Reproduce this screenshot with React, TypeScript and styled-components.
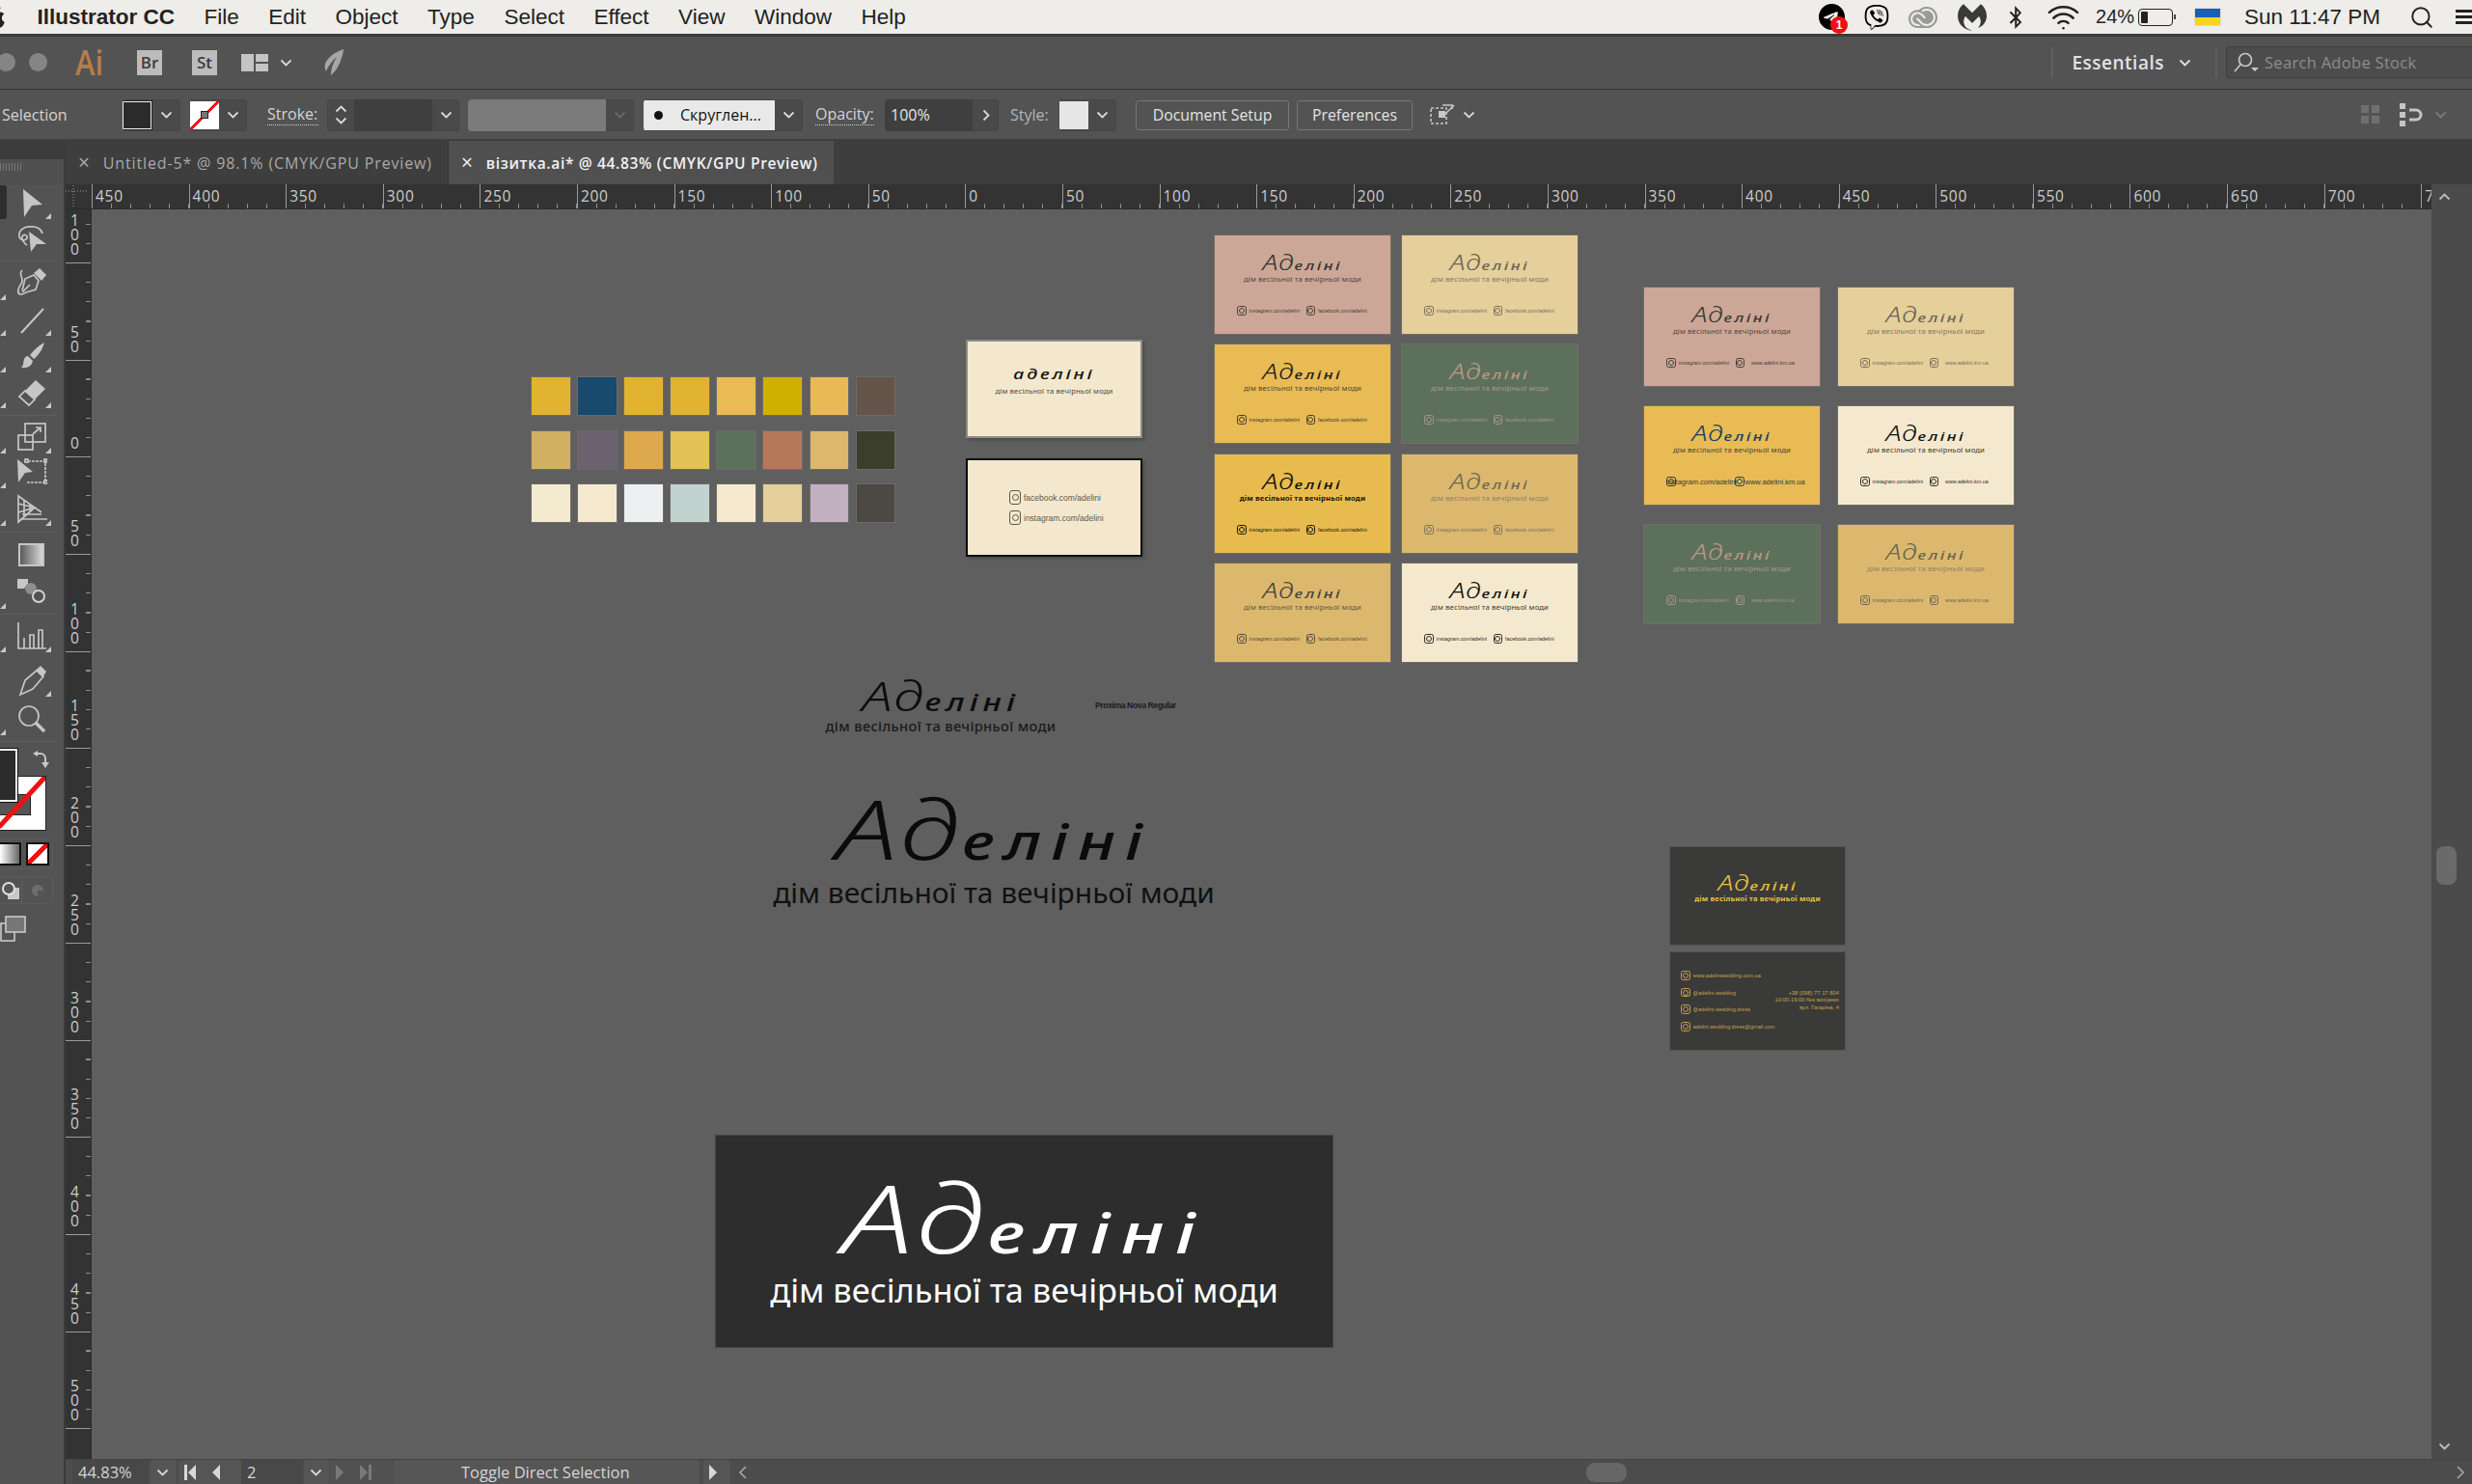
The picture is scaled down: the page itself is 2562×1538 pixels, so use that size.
import React from "react";
import styled, { createGlobalStyle } from "styled-components";
import { SiViber, SiTelegram, SiMalwarebytes, SiAdobecreativecloud } from "react-icons/si";
import { FaApple, FaBluetoothB } from "react-icons/fa";
import { Wifi, Search } from "lucide-react";

const UI = `"Open Sans", "Noto Sans", sans-serif`;
const SYS = `"Liberation Sans", Arimo, sans-serif`;

const Global = createGlobalStyle`
  html, body { margin: 0; padding: 0; background: #535353; }
  * { box-sizing: border-box; }
`;

const Page = styled.div`
  width: 2562px; height: 1538px; overflow: hidden; display: flex; flex-direction: column;
  background: #535353; font-family: ${UI};
`;

/* ---------- macOS menu bar ---------- */
const MenuBar = styled.div`
  height: 38px; flex: none; display: flex; align-items: flex-start; background: #eeede9;
  border-bottom: 3px solid #3b3b3b; color: #222; font-family: ${SYS}; font-size: 22.5px; position: relative;
`;
const MenuLeft = styled.div`display: flex; align-items: center; height: 35px; gap: 30.5px;`;
const AppleMark = styled.span`display: flex; margin-left: -16px; margin-right: -3px; font-size: 24px; color: #222;`;
const AppName = styled.span`font-weight: 700; margin-left: 3px;`;
const MenuRight = styled.div`margin-left: auto; display: flex; align-items: center; height: 35px; margin-right: -3px;`;
const TrayItem = styled.span<{ $ml: number; $c?: string }>`
  display: flex; align-items: center; margin-left: ${(p) => p.$ml}px; color: ${(p) => p.$c || "#111"}; position: relative;
`;
const Badge = styled.span`
  position: absolute; right: -3px; bottom: -4px; width: 18px; height: 18px; border-radius: 50%;
  background: #ee1111; color: #fff; font-size: 12px; font-weight: 700; display: flex; align-items: center; justify-content: center;
`;
const TrayText = styled.span<{ $ml: number; $size?: number }>`
  margin-left: ${(p) => p.$ml}px; font-size: ${(p) => p.$size || 22.5}px; color: #222; white-space: nowrap;
`;
const Battery = styled.span`
  margin-left: 4px; width: 36px; height: 18px; border: 1.5px solid #222; border-radius: 4px; padding: 2px; display: flex; position: relative;
  &::before { content: ""; width: 7px; background: #222; border-radius: 1px; }
  &::after { content: ""; position: absolute; right: -4px; top: 5px; width: 2px; height: 5px; background: #444; }
`;
const Flag = styled.span`
  margin-left: 23px; width: 26px; height: 17px; background: linear-gradient(#1a5fb4 0 50%, #f7d51d 50% 100%); box-shadow: 0 0 0 1px #ddd;
`;
const ListIcon = styled.span`
  margin-left: 22px; width: 20px; height: 15px; flex: none;
  background: repeating-linear-gradient(#222 0 3px, transparent 3px 6px);
`;

/* ---------- Application bar ---------- */
const AppBar = styled.div`
  height: 55px; flex: none; display: flex; align-items: center; background: #535353; border-bottom: 1px solid #363636; padding-bottom: 1px;
`;
const WinDot = styled.span<{ $ml: number }>`
  width: 19px; height: 19px; border-radius: 50%; background: #858585; margin-left: ${(p) => p.$ml}px; flex: none;
`;
const AiLogo = styled.span`
  margin-left: 29px; font-family: "Open Sans", sans-serif; font-size: 36px; line-height: 1; color: #b67c4b; font-weight: 600; width: 30px; transform: scaleX(.86); transform-origin: left;
`;
const AppTile = styled.span<{ $ml: number }>`
  margin-left: ${(p) => p.$ml}px; width: 26px; height: 26px; background: #bcbcbc; color: #3d3d3d; font-size: 17px; font-weight: 600;
  display: flex; align-items: center; justify-content: center; flex: none;
`;
const AppIcon = styled.span<{ $ml: number }>`margin-left: ${(p) => p.$ml}px; display: flex; flex: none;`;
const AppRight = styled.div`margin-left: auto; display: flex; align-items: center; height: 100%;`;
const VSep = styled.span`width: 2px; height: 32px; background: #5f5f5f; flex: none;`;
const Essentials = styled.span`
  font-size: 19px; font-weight: 600; color: #e2e2e2; margin-left: 19px; margin-right: 15px; letter-spacing: .5px;
`;
const ChevSpacer = styled.span`width: 25px; flex: none;`;
const StockSearch = styled.div`
  width: 255px; height: 33px; margin-left: 9px; border: 1px solid #3e3e3e; border-right: 0; border-radius: 4px 0 0 4px; background: #4c4c4c;
  display: flex; align-items: center; padding-left: 7px; color: #8c8c8c; font-size: 16.5px; gap: 6px; letter-spacing: .3px;
`;

/* ---------- Control bar ---------- */
const ControlBar = styled.div`
  height: 53px; flex: none; display: flex; align-items: center; background: #535353; border-bottom: 2px solid #3e3e3e; color: #d0d0d0; font-size: 16px; padding-top: 1px;
`;
const CtrlLabel = styled.span<{ $ml: number; $w: number; $dotted?: boolean; $c?: string }>`
  margin-left: ${(p) => p.$ml}px; width: ${(p) => p.$w}px; flex: none; white-space: nowrap; color: ${(p) => p.$c || "#d4d4d4"};
  ${(p) => p.$dotted && "border-bottom: 1px dotted #d4d4d4; line-height: 21px;"}
`;
const Group = styled.div<{ $ml: number; $w: number }>`
  margin-left: ${(p) => p.$ml}px; width: ${(p) => p.$w}px; height: 33px; flex: none; display: flex; align-items: stretch;
  background: #4a4a4a; border-radius: 4px; overflow: hidden; box-shadow: inset 0 0 0 1px #454545;
`;
const ChevBox = styled.span<{ $w: number }>`
  width: ${(p) => p.$w}px; flex: none; display: flex; align-items: center; justify-content: center;
`;
const FillChip = styled.span`width: 30px; flex: none; margin: 2px 0; background: #2b2b2b; border: 1.5px solid #f3f3f3; box-shadow: 0 0 0 1px #222;`;
const NoneChip = styled.span`
  width: 30px; flex: none; margin: 2px 0; position: relative; display: flex; align-items: center; justify-content: center;
  background: linear-gradient(135deg, #fff 0 46%, #ee1111 46% 54%, #fff 54% 100%);
`;
const NoneDot = styled.span`width: 8px; height: 8px; border: 1px solid #222; background: #777;`;
const Stepper = styled.span`width: 28px; flex: none; display: flex; flex-direction: column; align-items: center; justify-content: space-around; padding: 4px 0;`;
const DarkInput = styled.span<{ $w: number }>`
  width: ${(p) => p.$w}px; flex: none; background: #3f3f3f; color: #e6e6e6; display: flex; align-items: center; padding-left: 6px;
`;
const GreyBlock = styled.span`width: 143px; flex: none; background: #7b7b7b;`;
const BrushPick = styled.span`
  width: 136px; flex: none; background: #e9e9e9; color: #111; display: flex; align-items: center; margin: 1px 0; font-size: 16px; white-space: nowrap;
  &::before { content: ""; width: 9px; height: 9px; border-radius: 50%; background: #111; margin: 0 18px 0 11px; }
`;
const LightChip = styled.span`width: 30px; flex: none; margin: 2px 0; background: #e6e6e6;`;
const CtrlButton = styled.button<{ $ml: number; $w: number }>`
  margin-left: ${(p) => p.$ml}px; width: ${(p) => p.$w}px; height: 31px; flex: none; background: #535353; border: 1px solid #777; border-radius: 3px;
  color: #e4e4e4; font-family: ${UI}; font-size: 15.8px; padding: 0;
`;
const CtrlIcon = styled.span<{ $ml: number }>`margin-left: ${(p) => p.$ml}px; display: flex; flex: none;`;

/* ---------- Workspace ---------- */
const Workspace = styled.div`flex: 1; min-height: 0; display: flex;`;

const ToolPanel = styled.div`
  width: 68px; flex: none; background: #3c3c3c; display: flex; flex-direction: column; border-right: 2px solid #3a3a3a; overflow: hidden;
`;
const ToolHead = styled.div`
  height: 27px; margin-top: 19px; flex: none; background: #505050; padding-top: 4px;
  &::before { content: ""; display: block; width: 24px; height: 8px; background: repeating-linear-gradient(90deg, #777 0 1px, transparent 1px 3px); }
`;
const ToolBody = styled.div`flex: 1; background: #535353; display: flex; flex-direction: column;`;
const ToolRow = styled.div<{ $h: number; $mt?: number; $selected?: boolean }>`
  height: ${(p) => p.$h}px; margin-top: ${(p) => p.$mt || 0}px; flex: none; display: flex; position: relative; padding-left: 17px; align-items: center;
  ${(p) => p.$selected && `&::before { content: ""; position: absolute; left: -4px; top: 0; width: 11px; height: 35px; border-radius: 3px; background: #2d2d2d; }`}
`;
const Corner = styled.span<{ $x: number }>`
  position: absolute; left: ${(p) => p.$x}px; bottom: 2px; width: 0; height: 0;
  border-bottom: 6px solid #c8c8c8; border-left: 6px solid transparent;
`;
const ToolSep = styled.div<{ $mt: number; $mb: number }>`
  height: 1px; margin: ${(p) => p.$mt}px 8px ${(p) => p.$mb}px 0; background: #5e5e5e; flex: none;
`;
const ToolSvg = styled.svg.attrs({ viewBox: "0 0 32 32", width: 32, height: 32, fill: "none" })`
  stroke: #c6c6c6; stroke-width: 1.7; flex: none;
`;
const Solid = styled.g`fill: #c6c6c6; stroke: none;`;
const FillStroke = styled.div`height: 91px; margin-top: 2px; flex: none; position: relative;`;
const FillBig = styled.span`
  position: absolute; left: -3px; top: 4px; width: 21px; height: 55px; background: #2b2b2b; border: 2px solid #f2f2f2; box-shadow: 0 0 0 1px #111; z-index: 2;
`;
const StrokeBig = styled.span`
  position: absolute; left: -3px; top: 33px; width: 50px; height: 55px; background: #fff; box-shadow: 0 0 0 1px #222;
  &::before { content: ""; position: absolute; left: 0; top: 18px; width: 33px; height: 20px; background: #555; border: 1px solid #222; }
`;
const RedSlash = styled.svg.attrs({ viewBox: "0 0 50 55", width: 50, height: 55 })`position: absolute; left: 0; top: 0;`;
const SwapIcon = styled.span`position: absolute; left: 33px; top: 6px; display: flex;`;
const ModePanel = styled.div<{ $mt: number; $h: number }>`
  height: ${(p) => p.$h}px; margin-top: ${(p) => p.$mt}px; width: 55px; flex: none; display: flex; align-items: center;
  border: 1px solid #5c5c5c; border-left: 0; border-radius: 0 5px 5px 0;
`;
const ModeCell = styled.span<{ $w: number }>`
  width: ${(p) => p.$w}px; flex: none; height: 100%; display: flex; align-items: center; justify-content: center; border-right: 1px solid #5c5c5c;
  &:last-child { border-right: 0; }
`;
const GradChip = styled.span`
  width: 20px; height: 20px; margin-left: -3px; background: linear-gradient(90deg, #fff, #666); box-shadow: 0 0 0 2px #111;
`;
const NoneSmall = styled.span`
  width: 20px; height: 20px; background: linear-gradient(135deg, #fff 0 42%, #ee1111 42% 58%, #fff 58% 100%); box-shadow: 0 0 0 2px #111;
`;
const ScreenMode = styled.div`margin-top: 12px; height: 30px; flex: none; display: flex;`;

const MainCol = styled.div`flex: 1; min-width: 0; display: flex; flex-direction: column;`;
const TabBar = styled.div`height: 45px; flex: none; display: flex; background: #3e3e3e;`;
const Tab = styled.div<{ $w: number; $active?: boolean }>`
  width: ${(p) => p.$w}px; flex: none; display: flex; align-items: center; background: ${(p) => (p.$active ? "#505050" : "#3e3e3e")};
  color: ${(p) => (p.$active ? "#f2f2f2" : "#a9a9a9")}; font-size: ${(p) => (p.$active ? 15.5 : 16)}px; letter-spacing: ${(p) => (p.$active ? 0.67 : 0.85)}px; white-space: nowrap; padding-left: 13px; gap: 13px;
  font-weight: ${(p) => (p.$active ? 600 : 400)};
  ${(p) => !p.$active && "border-right: 1px solid #333;"}
`;
const TabClose = styled.span`font-size: 21px; line-height: 1; font-weight: 400;`;
const HRuler = styled.div`height: 26px; flex: none; display: flex; background: #333; overflow: hidden; border-bottom: 1px solid #2c2c2c;`;
const RulerCorner = styled.div`width: 27px; flex: none; display: flex;`;
const HCell = styled.div`
  width: 100.6px; flex: none; border-left: 1px solid #9a9a9a; padding-left: 3px; color: #cdcdcd; font-size: 15.5px; letter-spacing: .7px; line-height: 24px; height: 25px;
  background: repeating-linear-gradient(90deg, transparent 0 19px, #8d8d8d 19px 20.12px) left bottom / 100% 5px no-repeat;
`;
const Middle = styled.div`flex: 1; min-height: 0; display: flex;`;
const VRuler = styled.div`width: 27px; flex: none; background: #333; display: flex; flex-direction: column; overflow: hidden; border-right: 1px solid #2c2c2c;`;
const VCell = styled.div<{ $h: number }>`
  height: ${(p) => p.$h}px; flex: none; border-bottom: 1px solid #9a9a9a; display: flex; flex-direction: column; justify-content: flex-end; padding: 0 0 6px 5px;
  background: repeating-linear-gradient(0deg, transparent 0 19px, #8d8d8d 19px 20.14px) right bottom / 5px 100% no-repeat;
`;
const VLabel = styled.span`color: #cdcdcd; font-size: 15.5px; line-height: 15px; width: 10px; word-break: break-all; display: block;`;
const Canvas = styled.div`flex: 1; min-width: 0; background: #5f5f5f; position: relative; overflow: hidden;`;
const VScroll = styled.div`
  width: 42px; margin-top: -26px; flex: none; background: #4b4b4b; display: flex; flex-direction: column; align-items: flex-start; position: relative;
`;
const ScrollBtn = styled.span`width: 26px; height: 26px; display: flex; align-items: center; justify-content: center; flex: none;`;
const VThumb = styled.span`width: 21px; height: 40px; margin: 660px 0 0 5px; background: #6a6a6a; border-radius: 8px; flex: none;`;
const Grow = styled.span`flex: 1;`;
const StatusBar = styled.div`height: 26px; flex: none; display: flex; align-items: stretch; background: #4c4c4c; color: #d5d5d5; font-size: 16.5px; border-top: 1px solid #444;`;
const StatusBox = styled.span<{ $w: number; $ml?: number; $bg?: string }>`
  width: ${(p) => p.$w}px; margin-left: ${(p) => p.$ml || 0}px; flex: none; display: flex; align-items: center; gap: 17px; padding-left: 6px;
  background: ${(p) => p.$bg || "#555"}; border-radius: 3px 3px 0 0; white-space: nowrap;
`;
const StatusMsg = styled.span`margin-left: 64px;`;
const Track = styled.div`flex: 1; display: flex; align-items: center; justify-content: space-between; padding-right: 7px; padding-left: 8px;`;
const HThumb = styled.span`width: 42px; height: 20px; border-radius: 9px; background: #666; margin-left: 869px;`;
const Tri = styled.span<{ $dir: "l" | "r"; $c?: string }>`
  width: 0; height: 0; border-top: 8px solid transparent; border-bottom: 8px solid transparent; flex: none;
  ${(p) => (p.$dir === "l" ? `border-right: 8px solid ${p.$c || "#d8d8d8"};` : `border-left: 8px solid ${p.$c || "#d8d8d8"};`)}
`;
const Bar = styled.span<{ $c?: string }>`width: 3px; height: 16px; background: ${(p) => p.$c || "#d8d8d8"}; flex: none;`;
const Pair = styled.span`display: flex; align-items: center; gap: 1px;`;

/* ---------- Artwork on the canvas ---------- */
const Placed = styled.div<{ $x: number; $y: number }>`
  position: absolute; left: ${(p) => p.$x - 95}px; top: ${(p) => p.$y - 218}px;
`;
const SwatchGrid = styled(Placed)`
  display: grid; grid-template-columns: repeat(8, 39.5px); grid-auto-rows: 39px; column-gap: 8.6px; row-gap: 16.5px;
`;
const Swatch = styled.div<{ $c: string }>`background: ${(p) => p.$c}; box-shadow: 0 0 0 1px rgba(110,110,110,.8);`;

const Script = styled.span<{ $em: number; $c: string }>`
  display: block; flex: none; height: 1.5em; padding-top: .5em; font-family: "Noto Sans", sans-serif; font-style: italic; font-weight: 500; font-size: ${(p) => p.$em}px; line-height: 1;
  letter-spacing: .15em; white-space: nowrap; color: ${(p) => p.$c}; transform: scaleX(1.34);
`;
const ScriptCap = styled.span`font-size: 1.7em; font-weight: 300; line-height: 0; letter-spacing: .02em;`;

const Card = styled(Placed)<{ $bg: string }>`
  width: 182px; height: 102px; background: ${(p) => p.$bg};
  box-shadow: 0 0 0 1px rgba(125,120,110,.6);
  display: flex; flex-direction: column; align-items: center; overflow: hidden; padding-top: 20px;
`;
const Tagline = styled.span<{ $c: string; $w?: number; $mt?: number }>`
  margin-top: ${(p) => (p.$mt === undefined ? 2.5 : p.$mt)}px; font-family: "Noto Sans", sans-serif; font-size: 7.7px; line-height: 9px; color: ${(p) => p.$c}; white-space: nowrap; font-weight: ${(p) => p.$w || 400}; letter-spacing: .14px;
`;
const Contacts = styled.div`
  margin-top: auto; margin-bottom: 19px; display: flex; align-items: center; width: 100%; padding-left: 23px; height: 10px; position: relative;
`;
const Social = styled.span<{ $c: string }>`
  width: 9.5px; height: 9.5px; border-radius: 2.5px; border: 1px solid ${(p) => p.$c}; flex: none; display: flex; align-items: center; justify-content: center;
  &::before { content: ""; width: 4px; height: 4px; border-radius: 50%; border: 1px solid ${(p) => p.$c}; }
`;
const ContactText = styled.span<{ $c: string; $w: number; $size?: number; $ml?: number }>`
  color: ${(p) => p.$c}; font-family: "Liberation Sans", sans-serif; font-size: ${(p) => p.$size || 5.4}px; margin-left: ${(p) => (p.$ml === undefined ? 3 : p.$ml)}px; width: ${(p) => p.$w}px; white-space: nowrap; flex: none;
`;

const LogoBlock = styled(Placed)<{ $w: number }>`
  width: ${(p) => p.$w}px; display: flex; flex-direction: column; align-items: center;
`;
const BigTag = styled.span<{ $size: number; $c: string; $ls?: number; $mt: number; $w?: number }>`
  margin-top: ${(p) => p.$mt}px; font-family: "Noto Sans", sans-serif; font-size: ${(p) => p.$size}px; line-height: 1.1; letter-spacing: ${(p) => p.$ls || 0}px; color: ${(p) => p.$c}; font-weight: ${(p) => p.$w || 400}; white-space: nowrap;
`;
const FontNote = styled(Placed)`
  font-family: "Liberation Sans", sans-serif; font-size: 8.6px; font-weight: 700; letter-spacing: -.4px; color: #1b1b1b; white-space: nowrap;
`;
const Banner = styled(Placed)`
  width: 641px; height: 221px; background: #2d2d2d; box-shadow: inset 0 0 0 1px #444; display: flex; flex-direction: column; align-items: center; padding-top: 43px;
`;
const CreamCard = styled(Placed)<{ $black?: boolean }>`
  width: 183px; height: 102px; background: #f3e8cd; border: ${(p) => (p.$black ? "2px solid #0c0c0c" : "2px solid #8c8c8c")};
  box-shadow: 2px 2px 3px rgba(40,40,40,.35); display: flex; flex-direction: column; align-items: center;
`;
const CreamFront = styled.div`display: flex; flex-direction: column; align-items: center; padding-top: 20px;`;
const CreamRows = styled.div`display: flex; flex-direction: column; gap: 6px; align-self: flex-start; margin: 31px 0 0 43px;`;
const CreamRow = styled.div`display: flex; align-items: center; gap: 3px; font-family: "Liberation Sans", sans-serif; font-size: 8.5px; color: #5c5850;`;
const CreamIcon = styled.span`
  width: 12px; height: 15px; border: 1px solid #5c5850; border-radius: 3px; display: flex; align-items: center; justify-content: center; flex: none;
  &::before { content: ""; width: 5px; height: 5px; border-radius: 50%; border: 1px solid #5c5850; }
`;
const DarkFront = styled(Placed)`
  width: 181px; height: 101px; background: #3a3a38; box-shadow: 0 0 0 1px #555; display: flex; flex-direction: column; align-items: center; padding-top: 29px;
`;
const DarkBack = styled(Placed)`
  width: 181px; height: 101px; background: #3a3a38; box-shadow: 0 0 0 1px #555; display: flex; padding: 19px 13px 0 11px; justify-content: space-between;
`;
const DarkList = styled.div`display: flex; flex-direction: column; gap: 7.6px;`;
const DarkRow = styled.div`display: flex; align-items: center; gap: 3px; color: #c4a24c; font-family: "Liberation Sans", sans-serif; font-size: 5.6px; height: 10px; white-space: nowrap;`;
const DarkAddr = styled.div`
  margin-top: 20px; display: flex; flex-direction: column; align-items: flex-end; color: #c4a24c; font-family: "Liberation Sans", sans-serif; font-size: 5.8px; line-height: 7.4px; white-space: nowrap;
`;

/* ---------- data ---------- */
const TAG = "дім весільної та вечірньої моди";
const swatches = [
  "#e2b330", "#174a6c", "#e1b32f", "#e2b330", "#e8bb55", "#d1b100", "#e9b955", "#65544a",
  "#d2b061", "#6a626f", "#dea84d", "#e3c356", "#5d705b", "#b5795a", "#dcb86f", "#3b3d2d",
  "#f4ead0", "#f4e9cf", "#ecf0f0", "#c2d3cf", "#f4e9cf", "#e5cf9a", "#c2b1c0", "#4c4844",
];
type C = { x: number; y: number; bg: string; s: string; t: string; k: string; bold?: boolean };
const ROSE = "#cca797", SAND = "#e5cf9a", YEL = "#e8bb55", GRN = "#5d705b", TAN = "#dcb86f", CRM = "#f4e9cf";
const cardsA: C[] = [
  { x: 1259, y: 245, bg: ROSE, s: "#35332f", t: "#4d4641", k: "#474038" },
  { x: 1453, y: 245, bg: SAND, s: "#6b6458", t: "#807865", k: "#776f5e" },
  { x: 1259, y: 358, bg: YEL, s: "#1d1c18", t: "#4e4630", k: "#453d28" },
  { x: 1453, y: 358, bg: GRN, s: "#b99a87", t: "#a89a87", k: "#a3978a" },
  { x: 1259, y: 472, bg: "#e8bb4f", s: "#0d0d0a", t: "#17150e", k: "#17150e", bold: true },
  { x: 1453, y: 472, bg: TAN, s: "#6b6a52", t: "#8c8164", k: "#7d735a" },
  { x: 1259, y: 585, bg: TAN, s: "#45443a", t: "#5d5642", k: "#544d3b" },
  { x: 1453, y: 585, bg: CRM, s: "#0f0f0d", t: "#3a3833", k: "#2d2b27" },
];
const cardsB: C[] = [
  { x: 1704, y: 299, bg: ROSE, s: "#3a3834", t: "#4d4641", k: "#474038" },
  { x: 1905, y: 299, bg: SAND, s: "#6b6458", t: "#807865", k: "#776f5e" },
  { x: 1905, y: 422, bg: CRM, s: "#0f0f0d", t: "#3a3833", k: "#2d2b27" },
  { x: 1704, y: 545, bg: GRN, s: "#b99a87", t: "#a89a87", k: "#a3978a" },
  { x: 1905, y: 545, bg: TAN, s: "#67664c", t: "#8c8164", k: "#6f674e" },
];
const hLabels = ["450","400","350","300","250","200","150","100","50","0","50","100","150","200","250","300","350","400","450","500","550","600","650","700","7"];
const vLabels = ["100","50","0","50","100","150","200","250","300","350","400","450","500"];

/* ---------- small drawings ---------- */
const Chev = ({ c = "#d8d8d8", up = false }: { c?: string; up?: boolean }) => (
  <svg width="13" height="8" viewBox="0 0 13 8" fill="none" stroke={c} strokeWidth="1.8">
    <polyline points={up ? "1.5,6.5 6.5,1.5 11.5,6.5" : "1.5,1.5 6.5,6.5 11.5,1.5"} />
  </svg>
);
const Wordmark = ({ em, c }: { em: number; c: string }) => (
  <Script $em={em} $c={c}><ScriptCap>Ад</ScriptCap>еліні</Script>
);

const tools: { h: number; mt?: number; sel?: boolean; l?: boolean; r?: boolean; sep?: [number, number]; icon: React.ReactNode }[] = [
  { h: 37, sel: true, r: true, icon: <ToolSvg><Solid><polygon points="7,1 27,17 16,18 8,30" /></Solid></ToolSvg> },
  { h: 38, sep: [3, 4], icon: <ToolSvg><path d="M15 3C8 2 2 7 3 13c1 4 6 5 8 2 1-3-3-5-5-2-1 3 2 7 5 9" /><path d="M14 3c6-1 12 2 13 7" /><Solid><polygon points="13,8 31,21 21,21 15,29" /></Solid></ToolSvg> },
  { h: 38, l: true, icon: <ToolSvg><path d="M6 2C1 7 9 10 5 16c-3 4-5 10-1 11 2 1 4-1 6-2l10-3 3-9-5-6-9 4-3 12" /><path d="M6 25l8-8" /><Solid><polygon points="18,5 24,0 31,7 26,13" /></Solid></ToolSvg> },
  { h: 37, l: true, r: true, icon: <ToolSvg><line x1="5" y1="29" x2="28" y2="4" strokeWidth="2" /></ToolSvg> },
  { h: 38, l: true, r: true, icon: <ToolSvg><Solid><path d="M29 2c-2 7-6 13-11 17l-4-4c4-5 9-10 15-13z" /><path d="M12 16l5 5c-1 5-5 8-12 7 3-3 2-6 3-9 1-2 2-3 4-3z" /></Solid></ToolSvg> },
  { h: 37, l: true, r: true, sep: [5, 3], icon: <ToolSvg><Solid><polygon points="9,14 20,3 30,12 19,23" /></Solid><polygon points="9,14 19,23 13,29 3,20" /></ToolSvg> },
  { h: 38, l: true, r: true, icon: <ToolSvg><rect x="2" y="14" width="15" height="15" /><rect x="9" y="2" width="21" height="19" /><path d="M17 13l8-7M20 6h5v5" /></ToolSvg> },
  { h: 36, l: true, icon: <ToolSvg><Solid><polygon points="1,2 17,15 9,16 2,26" /></Solid><path d="M12 4h18v22H10" strokeDasharray="3 1" /><rect x="9" y="2" width="3" height="3" /><rect x="29" y="2" width="3" height="3" /><rect x="29" y="24" width="3" height="3" /></ToolSvg> },
  { h: 39, l: true, r: true, sep: [4, 4], icon: <ToolSvg strokeWidth="1.2"><path d="M2 2l17 12-17 15zM2 10l17 4M2 19l17-5M8 6v18M14 10v9" /><path d="M19 14l7 5M6 21h20M4 26h28" /></ToolSvg> },
  { h: 38, icon: <ToolSvg><defs><linearGradient id="gt" x1="0" x2="1"><stop offset="0" stopColor="#555" /><stop offset="1" stopColor="#ddd" /></linearGradient></defs><rect x="3" y="5" width="25" height="22" fill="url(#gt)" stroke="#c6c6c6" strokeWidth="2" /></ToolSvg> },
  { h: 39, l: true, sep: [3, 4], icon: <ToolSvg><Solid><polygon points="1,2 12,2 12,7 8,12 1,12" /></Solid><circle cx="15" cy="12" r="6" fill="#8e8e8e" stroke="none" /><circle cx="23" cy="20" r="6" stroke="#d2d2d2" strokeWidth="2" /></ToolSvg> },
  { h: 37, l: true, r: true, icon: <ToolSvg strokeWidth="2"><path d="M2 1v27h29M8 28V17M14 28V14h4v14M23 28V9h4v19" /></ToolSvg> },
  { h: 37, mt: 9, r: true, icon: <ToolSvg><path d="M4 30l5-15 13-11 6 7-11 13z" /><Solid><polygon points="20,5 25,0 31,6 27,12" /></Solid></ToolSvg> },
  { h: 39, mt: 1, l: true, sep: [4, 1], icon: <ToolSvg strokeWidth="2"><circle cx="13" cy="13" r="10" /><line x1="20" y1="20" x2="29" y2="29" strokeWidth="3.5" /></ToolSvg> },
];

const ICard = ({ c, second, secondW, secondMl }: { c: C; second: string; secondW: number; secondMl?: number }) => (
  <Card $x={c.x} $y={c.y} $bg={c.bg}>
    <Wordmark em={12.6} c={c.s} />
    <Tagline $c={c.t} $w={c.bold ? 700 : 400}>{TAG}</Tagline>
    <Contacts>
      <Social $c={c.k} />
      <ContactText $c={c.k} $w={59}>instagram.com/adelini</ContactText>
      <Social $c={c.k} />
      <ContactText $c={c.k} $w={secondW} $ml={secondMl}>{second}</ContactText>
    </Contacts>
  </Card>
);

export default function App() {
  return (
    <Page>
      <Global />
      <MenuBar>
        <MenuLeft>
          <AppleMark><FaApple /></AppleMark>
          <AppName>Illustrator CC</AppName>
          {["File", "Edit", "Object", "Type", "Select", "Effect", "View", "Window", "Help"].map((m) => <span key={m}>{m}</span>)}
        </MenuLeft>
        <MenuRight>
          <TrayItem $ml={0} $c="#000"><SiTelegram size={27} /><Badge>1</Badge></TrayItem>
          <TrayItem $ml={20} $c="#000"><SiViber size={26} /></TrayItem>
          <TrayItem $ml={20} $c="#9a9a9a"><SiAdobecreativecloud size={30} /></TrayItem>
          <TrayItem $ml={21} $c="#3a3a3a"><SiMalwarebytes size={30} /></TrayItem>
          <TrayItem $ml={18} $c="#222"><FaBluetoothB size={24} /></TrayItem>
          <TrayItem $ml={20} $c="#222"><Wifi size={35} strokeWidth={1.7} /></TrayItem>
          <TrayText $ml={16} $size={20}>24%</TrayText>
          <Battery />
          <Flag />
          <TrayText $ml={25}>Sun 11:47 PM</TrayText>
          <TrayItem $ml={30} $c="#222"><Search size={26} strokeWidth={1.8} /></TrayItem>
          <ListIcon />
        </MenuRight>
      </MenuBar>

      <AppBar>
        <WinDot $ml={-3} /><WinDot $ml={14} />
        <AiLogo>Ai</AiLogo>
        <AppTile $ml={34}>Br</AppTile>
        <AppTile $ml={31}>St</AppTile>
        <AppIcon $ml={25}>
          <svg width="28" height="18" viewBox="0 0 28 18" fill="#c4c4c4"><rect width="13" height="18" /><rect x="15" width="13" height="8" /><rect x="15" y="10" width="13" height="8" /></svg>
        </AppIcon>
        <AppIcon $ml={12}><Chev /></AppIcon>
        <AppIcon $ml={26}>
          <svg width="30" height="30" viewBox="0 0 30 30" fill="#a6a6a6"><path d="M27 1C18 4 11 9 8 16c-1 3 0 6 1 8 2-5 6-11 11-15-3 5-6 11-6 19 5-4 9-11 11-18 1-3 2-6 2-9z" /></svg>
        </AppIcon>
        <AppRight>
          <VSep />
          <Essentials>Essentials</Essentials>
          <Chev c="#e2e2e2" />
          <ChevSpacer />
          <VSep />
          <StockSearch>
            <svg width="26" height="24" viewBox="0 0 26 24" fill="none" stroke="#c8c8c8" strokeWidth="1.7"><circle cx="12" cy="9" r="6.5" /><line x1="7" y1="14" x2="1" y2="21" /><polygon points="18,17 26,17 22,21" fill="#c8c8c8" stroke="none" /></svg>
            <span>Search Adobe Stock</span>
          </StockSearch>
        </AppRight>
      </AppBar>

      <ControlBar>
        <CtrlLabel $ml={2} $w={80}>Selection</CtrlLabel>
        <Group $ml={45} $w={60}><FillChip /><ChevBox $w={30}><Chev /></ChevBox></Group>
        <Group $ml={10} $w={59}><NoneChip><NoneDot /></NoneChip><ChevBox $w={29}><Chev /></ChevBox></Group>
        <CtrlLabel $ml={21} $w={53} $dotted>Stroke:</CtrlLabel>
        <Group $ml={9} $w={137}>
          <Stepper><Chev up /><Chev /></Stepper>
          <DarkInput $w={81} />
          <ChevBox $w={28}><Chev /></ChevBox>
        </Group>
        <Group $ml={9} $w={172}><GreyBlock /><ChevBox $w={29}><Chev c="#686868" /></ChevBox></Group>
        <Group $ml={10} $w={165}><BrushPick>Скруглен...</BrushPick><ChevBox $w={29}><Chev /></ChevBox></Group>
        <CtrlLabel $ml={13} $w={61} $dotted>Opacity:</CtrlLabel>
        <Group $ml={11} $w={118}>
          <DarkInput $w={91}>100%</DarkInput>
          <ChevBox $w={27}>
            <svg width="8" height="13" viewBox="0 0 8 13" fill="none" stroke="#d8d8d8" strokeWidth="1.8"><polyline points="1.5,1.5 6.5,6.5 1.5,11.5" /></svg>
          </ChevBox>
        </Group>
        <CtrlLabel $ml={12} $w={41} $c="#b5b5b5">Style:</CtrlLabel>
        <Group $ml={10} $w={59}><LightChip /><ChevBox $w={29}><Chev /></ChevBox></Group>
        <CtrlButton $ml={20} $w={159}>Document Setup</CtrlButton>
        <CtrlButton $ml={8} $w={120}>Preferences</CtrlButton>
        <CtrlIcon $ml={18}>
          <svg width="26" height="26" viewBox="0 0 26 26" fill="none" stroke="#c8c8c8" strokeWidth="1.6"><rect x="1" y="6" width="16" height="16" strokeDasharray="3 2" /><path d="M13 3h10v4M17 11l8-8" /><rect x="9" y="9" width="7" height="7" fill="#c8c8c8" stroke="none" /></svg>
        </CtrlIcon>
        <CtrlIcon $ml={8}><Chev /></CtrlIcon>
        <CtrlIcon $ml={917}>
          <svg width="22" height="22" viewBox="0 0 22 22" fill="#707070"><rect x="1" y="1" width="8" height="8" /><rect x="12" y="1" width="8" height="8" /><rect x="1" y="12" width="8" height="8" /><rect x="12" y="12" width="8" height="8" /></svg>
        </CtrlIcon>
        <CtrlIcon $ml={19}>
          <svg width="24" height="24" viewBox="0 0 24 24"><g fill="#c4c4c4"><rect x="0" y="0" width="6" height="6" /><rect x="0" y="9" width="6" height="6" /><rect x="0" y="18" width="6" height="6" /></g><path d="M10 7h7a5 5 0 0 1 0 10h-7" fill="none" stroke="#c4c4c4" strokeWidth="3" /></svg>
        </CtrlIcon>
        <CtrlIcon $ml={12}><Chev c="#7a7a7a" /></CtrlIcon>
      </ControlBar>

      <Workspace>
        <ToolPanel>
          <ToolHead />
          <ToolBody>
            {tools.map((t, i) => (
              <React.Fragment key={i}>
                <ToolRow $h={t.h} $mt={t.mt} $selected={t.sel}>
                  {t.icon}
                  {t.l && <Corner $x={0} />}
                  {t.r && <Corner $x={47} />}
                </ToolRow>
                {t.sep && <ToolSep $mt={t.sep[0]} $mb={t.sep[1]} />}
              </React.Fragment>
            ))}
            <FillStroke>
              <StrokeBig>
                <RedSlash><line x1="50" y1="0" x2="2" y2="52" stroke="#ee1111" strokeWidth="5" /></RedSlash>
              </StrokeBig>
              <FillBig />
              <SwapIcon>
                <svg width="18" height="18" viewBox="0 0 18 18" fill="none" stroke="#c8c8c8" strokeWidth="2"><path d="M4 3h5a5 5 0 0 1 5 5v6" /><polygon points="1,3 6,0 6,6" fill="#c8c8c8" stroke="none" /><polygon points="10,12 18,12 14,18" fill="#c8c8c8" stroke="none" /></svg>
              </SwapIcon>
            </FillStroke>
            <ModePanel $mt={6} $h={32}>
              <ModeCell $w={23}><GradChip /></ModeCell>
              <ModeCell $w={31}><NoneSmall /></ModeCell>
            </ModePanel>
            <ModePanel $mt={7} $h={29}>
              <ModeCell $w={23}>
                <svg width="18" height="18" viewBox="0 0 18 18"><rect x="6" y="6" width="12" height="12" fill="#c8c8c8" /><circle cx="7" cy="7" r="6" fill="#555" stroke="#e0e0e0" strokeWidth="2" /></svg>
              </ModeCell>
              <ModeCell $w={31}>
                <svg width="14" height="14" viewBox="0 0 14 14"><circle cx="7" cy="7" r="6" fill="#6e6e6e" /><path d="M7 7h6a6 6 0 0 1-6 6z" fill="#555" /></svg>
              </ModeCell>
            </ModePanel>
            <ScreenMode>
              <svg width="28" height="28" viewBox="0 0 28 28" fill="none" stroke="#c4c4c4" strokeWidth="1.7"><rect x="1" y="8" width="14" height="18" /><rect x="6" y="1" width="20" height="16" fill="#777" /></svg>
            </ScreenMode>
          </ToolBody>
        </ToolPanel>

        <MainCol>
          <TabBar>
            <Tab $w={397}><TabClose>×</TabClose><span>Untitled-5* @ 98.1% (CMYK/GPU Preview)</span></Tab>
            <Tab $w={399} $active><TabClose>×</TabClose><span>візитка.ai* @ 44.83% (CMYK/GPU Preview)</span></Tab>
          </TabBar>
          <HRuler>
            <RulerCorner>
              <svg width="27" height="25" viewBox="0 0 27 25" fill="none" stroke="#9a9a9a" strokeDasharray="1 2"><line x1="0" y1="7" x2="24" y2="7" /><line x1="8" y1="1" x2="8" y2="25" /></svg>
            </RulerCorner>
            {hLabels.map((l, i) => <HCell key={i}>{l}</HCell>)}
          </HRuler>
          <Middle>
            <VRuler>
              {vLabels.map((l, i) => (
                <VCell key={i} $h={i === 0 ? 56 : 100.7}><VLabel>{l}</VLabel></VCell>
              ))}
            </VRuler>
            <Canvas>
              <SwatchGrid $x={551} $y={392}>
                {swatches.map((c, i) => <Swatch key={i} $c={c} />)}
              </SwatchGrid>

              <CreamCard $x={1001} $y={353}>
                <CreamFront>
                  <Script $em={14.4} $c="#14130f">аделіні</Script>
                  <Tagline $c="#4c493f" $mt={5.9}>{TAG}</Tagline>
                </CreamFront>
              </CreamCard>
              <CreamCard $x={1001} $y={476} $black>
                <CreamRows>
                  <CreamRow><CreamIcon /><span>facebook.com/adelini</span></CreamRow>
                  <CreamRow><CreamIcon /><span>instagram.com/adelini</span></CreamRow>
                </CreamRows>
              </CreamCard>

              {cardsA.map((c, i) => <ICard key={i} c={c} second="facebook.com/adelini" secondW={60} />)}
              {cardsB.map((c, i) => <ICard key={i} c={c} second="www.adelini.km.ua" secondW={44} secondMl={7} />)}
              <Card $x={1704} $y={422} $bg={YEL}>
                <Wordmark em={12.6} c="#173f63" />
                <Tagline $c="#3e4439">{TAG}</Tagline>
                <Contacts>
                  <Social $c="#33352c" />
                  <ContactText $c="#2c3a3c" $w={71} $size={7.5} $ml={-9.5}>instagram.com/adelini</ContactText>
                  <Social $c="#173f63" />
                  <ContactText $c="#2c3a3c" $w={60} $size={7.5} $ml={1}>www.adelini.km.ua</ContactText>
                </Contacts>
              </Card>

              <LogoBlock $x={795} $y={703} $w={360}>
                <Wordmark em={25} c="#0d0d0d" />
                <BigTag $size={14.6} $c="#1b1b1b" $ls={.35} $mt={4} $w={500}>{TAG}</BigTag>
              </LogoBlock>
              <FontNote $x={1135} $y={727}>Proxima Nova Regular</FontNote>

              <LogoBlock $x={780} $y={823} $w={500}>
                <Wordmark em={50} c="#0b0b0b" />
                <BigTag $size={29.9} $c="#111" $mt={12}>{TAG}</BigTag>
              </LogoBlock>

              <Banner $x={741} $y={1177}>
                <Wordmark em={57.6} c="#fff" />
                <BigTag $size={34.4} $c="#fff" $mt={13}>{TAG}</BigTag>
              </Banner>

              <DarkFront $x={1731} $y={879}>
                <Wordmark em={12.6} c="#e6c044" />
                <Tagline $c="#e6c044" $w={700} $mt={1.5}>{TAG}</Tagline>
              </DarkFront>
              <DarkBack $x={1731} $y={988}>
                <DarkList>
                  {["www.adeliniwedding.com.ua", "@adelini.wedding", "@adelini.wedding.dress", "adelini.wedding.dress@gmail.com"].map((t) => (
                    <DarkRow key={t}><Social $c="#c4a24c" /><span>{t}</span></DarkRow>
                  ))}
                </DarkList>
                <DarkAddr>
                  <span>+38 (098) 77 17 804</span>
                  <span>10:00-19:00 без вихідних</span>
                  <span>вул. Гагаріна, 4</span>
                </DarkAddr>
              </DarkBack>
            </Canvas>
            <VScroll>
              <ScrollBtn><Chev up c="#bdbdbd" /></ScrollBtn>
              <VThumb />
              <Grow />
              <ScrollBtn><Chev c="#bdbdbd" /></ScrollBtn>
            </VScroll>
          </Middle>
          <StatusBar>
            <StatusBox $w={79} $ml={7} $bg="#484848">44.83%</StatusBox>
            <StatusBox $w={27} $ml={2}><Chev /></StatusBox>
            <StatusBox $w={65} $ml={2} $bg="#555"><Pair><Bar /><Tri $dir="l" /></Pair><Tri $dir="l" /></StatusBox>
            <StatusBox $w={63} $bg="#484848">2</StatusBox>
            <StatusBox $w={26} $ml={2}><Chev /></StatusBox>
            <StatusBox $w={66} $ml={1} $bg="#515151"><Tri $dir="r" $c="#7a7a7a" /><Pair><Tri $dir="r" $c="#7a7a7a" /><Bar $c="#7a7a7a" /></Pair></StatusBox>
            <StatusBox $w={317} $ml={0} $bg="#565656"><StatusMsg>Toggle Direct Selection</StatusMsg></StatusBox>
            <StatusBox $w={28} $ml={4}><Tri $dir="r" /></StatusBox>
            <Track>
              <svg width="10" height="16" viewBox="0 0 10 16" fill="none" stroke="#a8a8a8" strokeWidth="1.6"><polyline points="8,2 2,8 8,14" /></svg>
              <HThumb />
              <Grow />
              <svg width="10" height="16" viewBox="0 0 10 16" fill="none" stroke="#a8a8a8" strokeWidth="1.6"><polyline points="2,2 8,8 2,14" /></svg>
            </Track>
          </StatusBar>
        </MainCol>
      </Workspace>
    </Page>
  );
}
